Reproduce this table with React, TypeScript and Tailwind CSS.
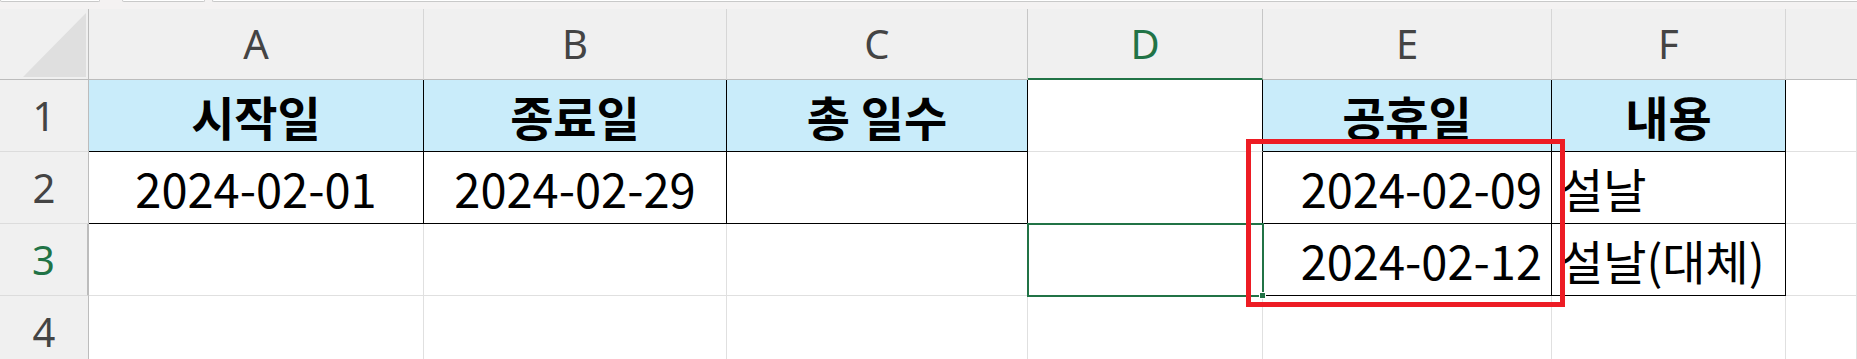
import React from 'react';

const GRID = 'grid grid-cols-[89px_335px_303px_301px_235px_289px_234px_1fr] grid-rows-[71px_72px_72px_72px_72px]';
const HEAD = "flex items-center justify-center bg-[#f0f0f0] text-[40px] leading-none text-[#444] font-['Noto_Sans',sans-serif]";
const ROWHEAD = "flex items-center justify-center bg-[#f0f0f0] border-r border-b border-r-[#bcbcbc] border-b-[#dcdcdc] text-[40px] leading-none text-[#444] font-['Noto_Sans',sans-serif]";
const CELL = "flex items-center text-[47px] leading-none text-black font-['Noto_Sans_CJK_KR',sans-serif]";
const GRIDLINE = 'border-r border-b border-[#e0e0e0]';
const BLACK = 'border-r border-b border-black';

function TopStrip() {
  return (
    <div className="flex h-[9px] gap-[7px] bg-[#f4f2f2]">
      <div className="h-[2px] w-[100px] rounded-b-[3px] border-x border-b border-[#c9c9c9] bg-white" />
      <div className="ml-[15px] h-[2px] w-[83px] rounded-b-[3px] border-x border-b border-[#c9c9c9] bg-white" />
      <div className="h-[2px] flex-1 rounded-bl-[3px] border-l border-b border-[#c9c9c9] bg-white" />
    </div>
  );
}

export default function App() {
  return (
    <div className="h-[359px] w-[1857px] overflow-hidden bg-white">
      <TopStrip />
      <div className={`relative ${GRID}`}>
        {/* column headers */}
        <div className="relative bg-[#f0f0f0] border-r border-b border-[#bcbcbc]">
          <svg className="absolute left-0 top-0" width="89" height="71" viewBox="0 0 89 71">
            <polygon points="23,68 86,68 86,4" fill="#dfdfdf" />
          </svg>
        </div>
        <div className={`${HEAD} border-r border-b border-r-[#d6d6d6] border-b-[#bcbcbc]`}>A</div>
        <div className={`${HEAD} border-r border-b border-r-[#d6d6d6] border-b-[#bcbcbc]`}>B</div>
        <div className={`${HEAD} border-r border-b border-r-[#c6c6c6] border-b-[#bcbcbc]`}>C</div>
        <div className={`${HEAD} border-r border-b-2 border-r-[#c6c6c6] border-b-[#217346] bg-[#e1e1e1] text-[#217346]`}>D</div>
        <div className={`${HEAD} border-r border-b border-r-[#d6d6d6] border-b-[#bcbcbc]`}>E</div>
        <div className={`${HEAD} border-r border-b border-r-[#d6d6d6] border-b-[#bcbcbc]`}>F</div>
        <div className={`${HEAD} border-b border-b-[#bcbcbc]`} />

        {/* row 1 */}
        <div className={ROWHEAD}>1</div>
        <div className={`${CELL} ${BLACK} justify-center bg-[#c9ecfa] font-bold`}>시작일</div>
        <div className={`${CELL} ${BLACK} justify-center bg-[#c9ecfa] font-bold`}>종료일</div>
        <div className={`${CELL} ${BLACK} justify-center bg-[#c9ecfa] font-bold`}>총 일수</div>
        <div className={`${CELL} border-r border-b border-r-black border-b-[#e0e0e0]`} />
        <div className={`${CELL} ${BLACK} justify-center bg-[#c9ecfa] font-bold`}>공휴일</div>
        <div className={`${CELL} ${BLACK} justify-center bg-[#c9ecfa] font-bold`}>내용</div>
        <div className={`${CELL} ${GRIDLINE}`} />

        {/* row 2 */}
        <div className={ROWHEAD}>2</div>
        <div className={`${CELL} ${BLACK} justify-center`}>2024-02-01</div>
        <div className={`${CELL} ${BLACK} justify-center`}>2024-02-29</div>
        <div className={`${CELL} ${BLACK}`} />
        <div className={`${CELL} border-r border-b border-r-black border-b-[#e0e0e0]`} />
        <div className={`${CELL} ${BLACK} justify-end pr-[9px]`}>2024-02-09</div>
        <div className={`${CELL} ${BLACK} pl-[8px]`}>설날</div>
        <div className={`${CELL} ${GRIDLINE}`} />

        {/* row 3 */}
        <div className={`${ROWHEAD} border-r-2 border-r-[#217346] bg-[#e1e1e1] text-[#217346]`}>3</div>
        <div className={`${CELL} ${GRIDLINE}`} />
        <div className={`${CELL} ${GRIDLINE}`} />
        <div className={`${CELL} ${GRIDLINE}`} />
        <div className={`relative ${CELL} ${GRIDLINE}`}>
          {/* active cell */}
          <div className="absolute -left-[1px] -top-[1px] h-[74px] w-[237px] border-2 border-[#217346]" />
          <div className="absolute -bottom-[4px] -right-[4px] h-[7px] w-[7px] border border-white bg-[#217346]" />
        </div>
        <div className={`${CELL} ${BLACK} justify-end pr-[9px]`}>2024-02-12</div>
        <div className={`${CELL} ${BLACK} pl-[8px]`}>설날(대체)</div>
        <div className={`${CELL} ${GRIDLINE}`} />

        {/* row 4 */}
        <div className={ROWHEAD}>4</div>
        <div className={`${CELL} ${GRIDLINE}`} />
        <div className={`${CELL} ${GRIDLINE}`} />
        <div className={`${CELL} ${GRIDLINE}`} />
        <div className={`${CELL} ${GRIDLINE}`} />
        <div className={`${CELL} ${GRIDLINE}`} />
        <div className={`${CELL} ${GRIDLINE}`} />
        <div className={`${CELL} ${GRIDLINE}`} />

        {/* red annotation box */}
        <div className="pointer-events-none absolute left-[1246px] top-[130px] h-[168px] w-[319px] border-[5px] border-[#ed1c24]" />
      </div>
    </div>
  );
}
